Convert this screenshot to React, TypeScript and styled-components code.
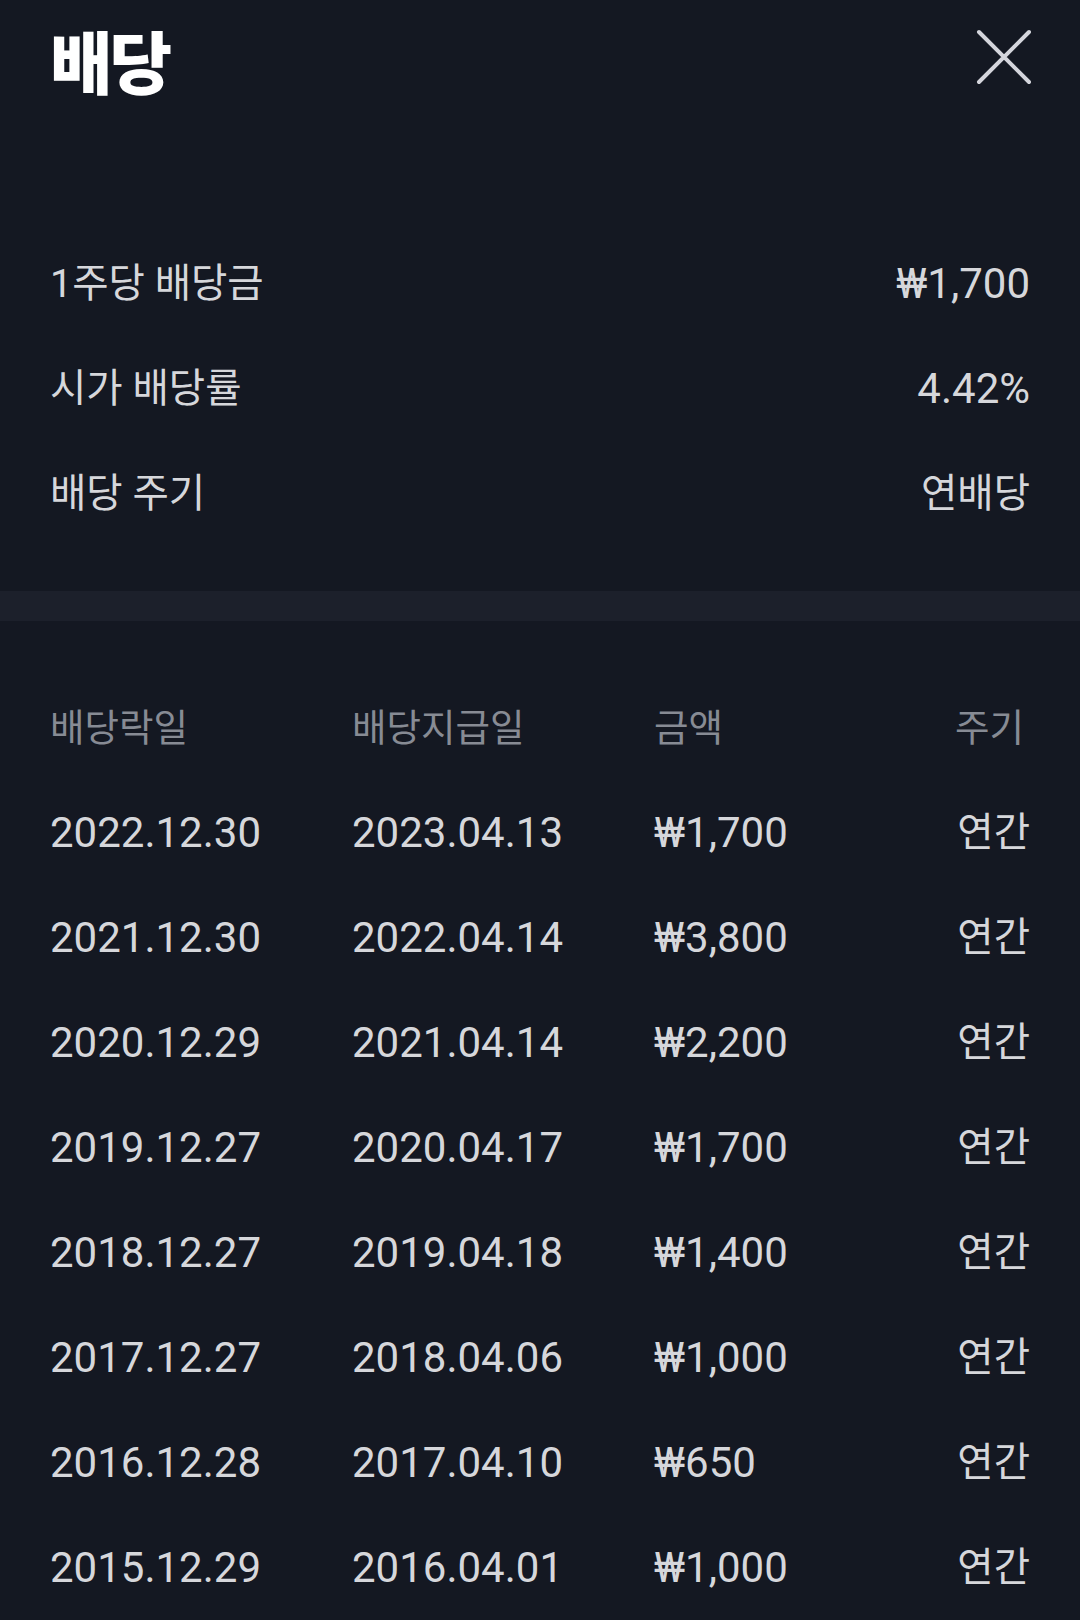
import React from "react";
import styled, { createGlobalStyle } from "styled-components";

const GlobalStyle = createGlobalStyle`
  html, body {
    margin: 0;
    padding: 0;
    background: #141822;
  }
  body {
    font-family: Roboto, "Noto Sans CJK KR", sans-serif;
    -webkit-font-smoothing: antialiased;
  }
`;

const Page = styled.div`
  width: 1080px;
  min-height: 1620px;
  background: #141822;
  color: #d6d7db;
  display: flex;
  flex-direction: column;
`;

const Header = styled.header`
  height: 130px;
  padding: 0 50px 0 50px;
  display: flex;
  align-items: center;
  justify-content: space-between;
`;

const Title = styled.h1`
  margin: -10px 0 0;
  font-family: "Noto Sans CJK KR", sans-serif;
  font-weight: 900;
  font-size: 68px;
  letter-spacing: -3px;
  line-height: 1;
  color: #ffffff;
`;

const CloseButton = styled.button`
  width: 60px;
  height: 60px;
  margin-right: -4px;
  margin-top: -16px;
  padding: 0;
  border: 0;
  background: transparent;
  display: flex;
  align-items: center;
  justify-content: center;
`;

const Summary = styled.section`
  padding: 101px 50px 45px;
  display: flex;
  flex-direction: column;
`;

const SummaryRow = styled.div`
  height: 105px;
  display: flex;
  align-items: center;
  justify-content: space-between;
`;

const Label = styled.span`
  font-family: Roboto, "Noto Sans CJK KR", sans-serif;
  font-size: 39.5px;
  line-height: 1;
  color: #d6d7db;
`;

const Value = styled.span<{ $num?: boolean }>`
  font-family: Roboto, "Noto Sans CJK KR", sans-serif;
  font-size: ${(p) => (p.$num ? "42px" : "39.5px")};
  line-height: 1;
  color: #d6d7db;
`;

const Band = styled.div`
  height: 30px;
  background: #1c202b;
`;

const Table = styled.section`
  padding: 56px 50px 0;
  display: flex;
  flex-direction: column;
`;

const Row = styled.div<{ $head?: boolean }>`
  height: ${(p) => (p.$head ? "103px" : "105px")};
  display: grid;
  grid-template-columns: 302px 302px 1fr 200px;
  align-items: center;
`;

const Cell = styled.span<{ $head?: boolean; $num?: boolean; $right?: boolean }>`
  font-family: Roboto, "Noto Sans CJK KR", sans-serif;
  font-size: ${(p) => (p.$head ? "37.5px" : p.$num ? "42px" : "39.5px")};
  line-height: 1;
  color: ${(p) => (p.$head ? "#878b94" : "#d6d7db")};
  text-align: ${(p) => (p.$right ? "right" : "left")};
  padding-right: ${(p) => (p.$head && p.$right ? "6px" : "0")};
`;

const summary = [
  { label: "1주당 배당금", value: "₩1,700", num: true },
  { label: "시가 배당률", value: "4.42%", num: true },
  { label: "배당 주기", value: "연배당", num: false },
];

const rows = [
  ["2022.12.30", "2023.04.13", "₩1,700"],
  ["2021.12.30", "2022.04.14", "₩3,800"],
  ["2020.12.29", "2021.04.14", "₩2,200"],
  ["2019.12.27", "2020.04.17", "₩1,700"],
  ["2018.12.27", "2019.04.18", "₩1,400"],
  ["2017.12.27", "2018.04.06", "₩1,000"],
  ["2016.12.28", "2017.04.10", "₩650"],
  ["2015.12.29", "2016.04.01", "₩1,000"],
];

export default function App() {
  return (
    <Page>
      <GlobalStyle />
      <Header>
        <Title>배당</Title>
        <CloseButton aria-label="닫기">
          <svg width="56" height="56" viewBox="0 0 56 56">
            <path
              d="M3 3 L53 53 M53 3 L3 53"
              stroke="#d4d5dc"
              strokeWidth="4"
              strokeLinecap="round"
              fill="none"
            />
          </svg>
        </CloseButton>
      </Header>
      <Summary>
        {summary.map((s) => (
          <SummaryRow key={s.label}>
            <Label>{s.label}</Label>
            <Value $num={s.num}>{s.value}</Value>
          </SummaryRow>
        ))}
      </Summary>
      <Band />
      <Table>
        <Row $head>
          <Cell $head>배당락일</Cell>
          <Cell $head>배당지급일</Cell>
          <Cell $head>금액</Cell>
          <Cell $head $right>
            주기
          </Cell>
        </Row>
        {rows.map((r) => (
          <Row key={r[0]}>
            <Cell $num>{r[0]}</Cell>
            <Cell $num>{r[1]}</Cell>
            <Cell $num>{r[2]}</Cell>
            <Cell $right>연간</Cell>
          </Row>
        ))}
      </Table>
    </Page>
  );
}
